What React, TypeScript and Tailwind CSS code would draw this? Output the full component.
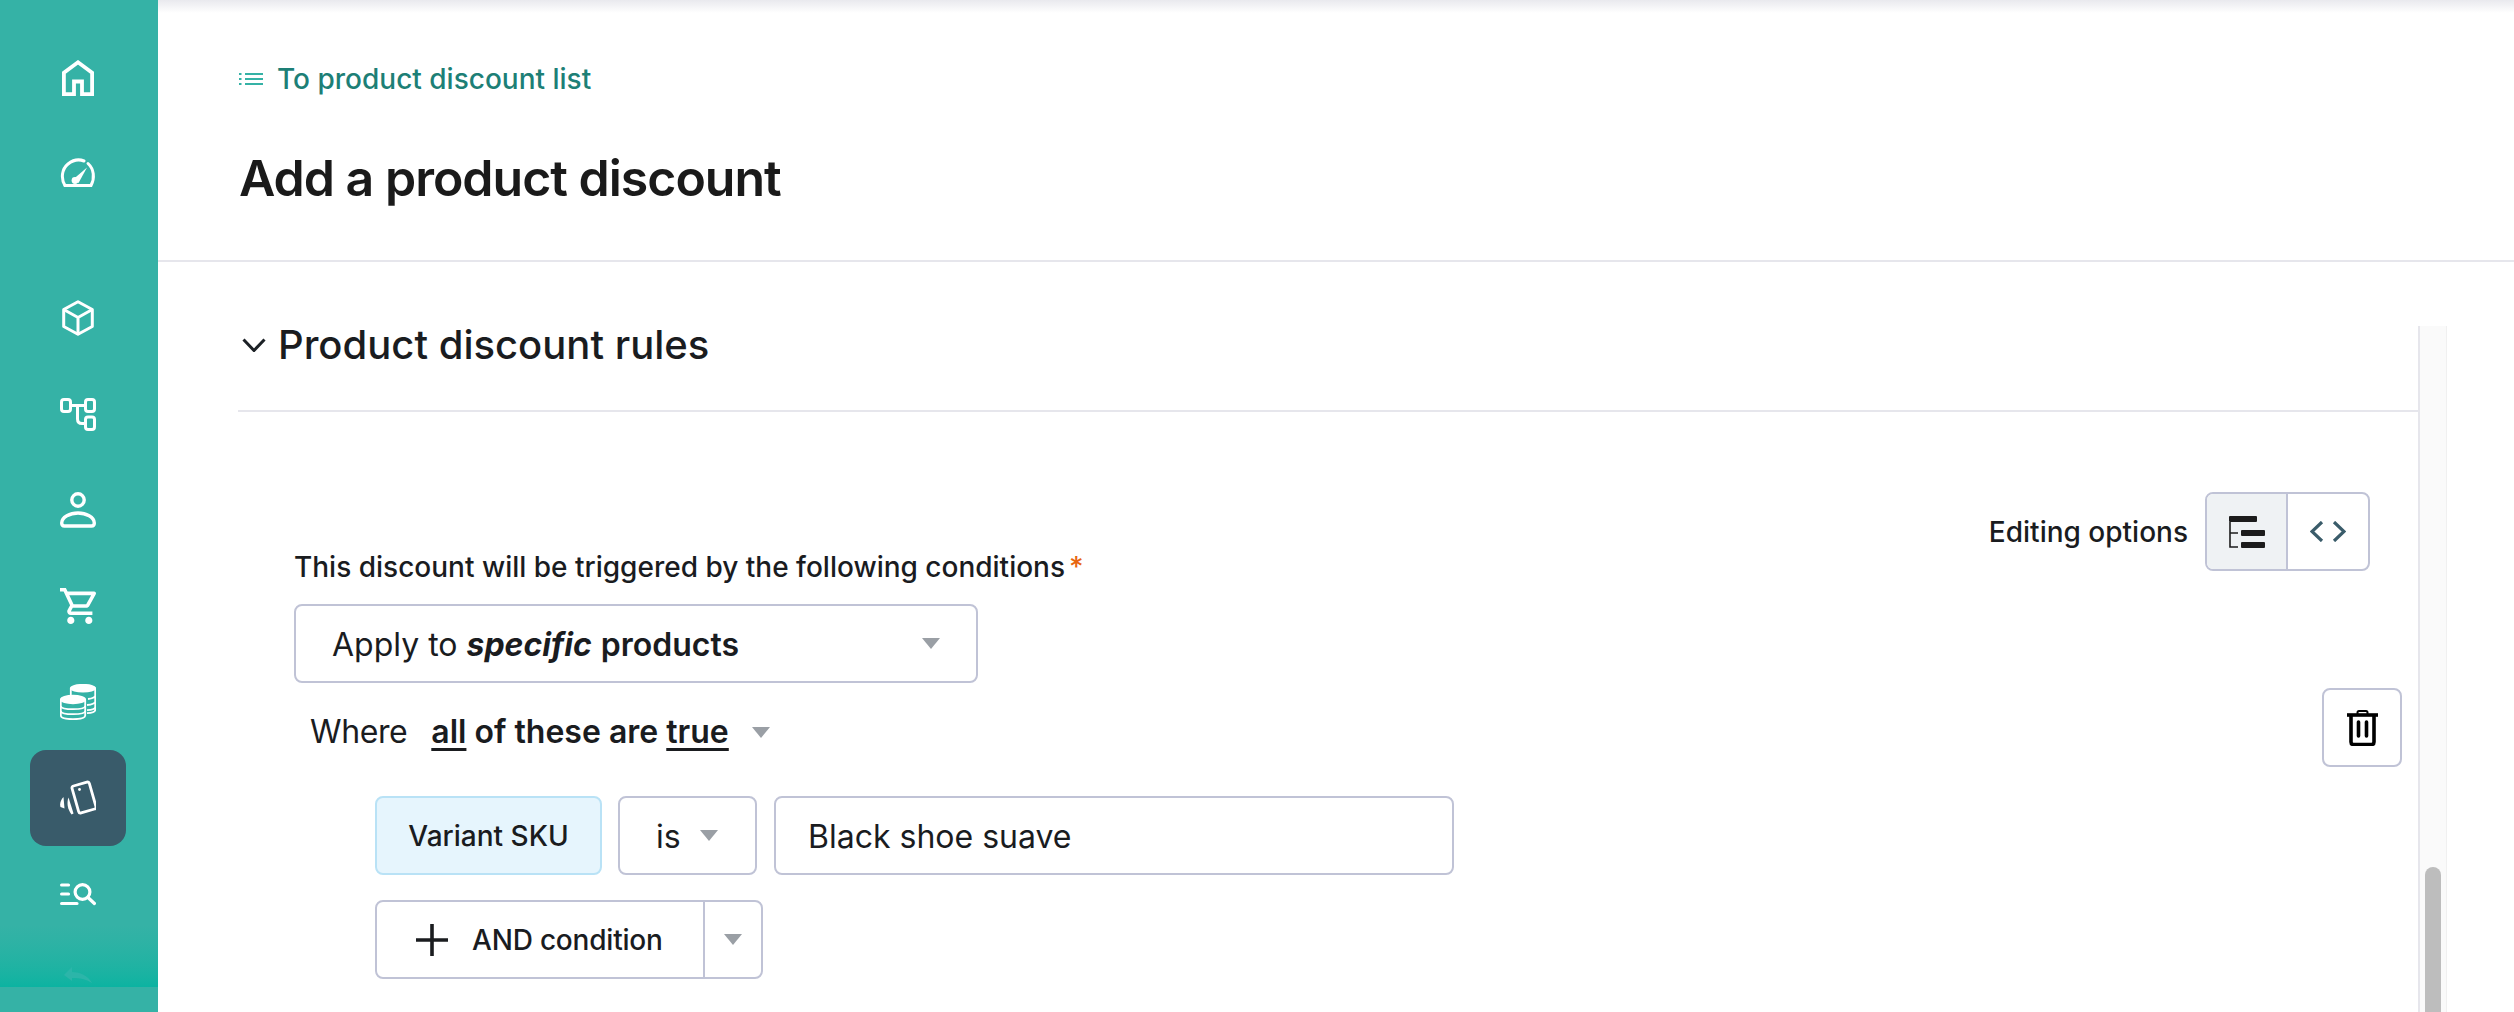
import React from 'react';

const Caret = () => (
  <svg viewBox="0 0 18 11" className="w-[18px] h-[11px] shrink-0">
    <path d="M0 0H18L9 11Z" fill="#9a9fa5" />
  </svg>
);

const HomeIcon = () => (
  <svg viewBox="0 0 32 36" className="w-8 h-9" fill="none" stroke="#fff" strokeWidth="3.8">
    <path d="M1.9 34.1V12.8L16 2.3L30.1 12.8V34.1H20V21.5H12V34.1Z" />
  </svg>
);

const GaugeIcon = () => (
  <svg viewBox="0 0 36 29" className="w-9 h-[29px]" fill="none" stroke="#fff" strokeWidth="3" strokeLinecap="round">
    <path d="M5 27.5H31C35 20 34 11 28 5.5" />
    <path d="M5 27.5C0.5 20 2 11 8 6C13 2 19 1 24 3" />
    <path d="M13 21.5L27 9.5L18.5 25Z" fill="#fff" stroke="none" />
    <circle cx="15" cy="22.5" r="3.4" fill="#fff" stroke="none" />
  </svg>
);

const CubeIcon = () => (
  <svg viewBox="0 0 32 36" className="w-8 h-9" fill="none" stroke="#fff" strokeWidth="3" strokeLinejoin="round">
    <path d="M16 1.7L30.3 9.5V26.5L16 34.3L1.7 26.5V9.5Z" />
    <path d="M1.7 9.5L16 17.5L30.3 9.5M16 17.5V34.3" />
  </svg>
);

const TreeIcon = () => (
  <svg viewBox="0 0 36 33" className="w-9 h-[33px]" fill="none" stroke="#fff" strokeWidth="3">
    <rect x="1.5" y="1.5" width="9" height="12" rx="2.5" />
    <rect x="25.5" y="1.5" width="9" height="12" rx="2.5" />
    <rect x="25.5" y="19" width="9" height="12.5" rx="2.5" />
    <path d="M10 7.5H26M17.5 7.5V21C17.5 24 19 25.5 22 25.5H26" />
  </svg>
);

const PersonIcon = () => (
  <svg viewBox="0 0 36 36" className="w-9 h-9" fill="none" stroke="#fff" strokeWidth="3.4">
    <circle cx="18" cy="8" r="6.2" />
    <path d="M4.5 34H31.5C33.5 34 34.3 33 34.3 31C34.3 25 26 21 18 21C10 21 1.7 25 1.7 31C1.7 33 2.5 34 4.5 34Z" />
  </svg>
);

const CartIcon = () => (
  <svg viewBox="1 2 20 20" className="w-9 h-9" fill="#fff">
    <path d="M15.55 13c.75 0 1.41-.41 1.75-1.03l3.58-6.49c.37-.66-.11-1.48-.87-1.48H5.21l-.94-2H1v2h2l3.6 7.59-1.35 2.44C4.52 15.37 5.48 17 7 17h12v-2H7l1.1-2h7.45zM6.16 6h12.15l-2.76 5H8.53L6.16 6zM7 18c-1.1 0-1.99.9-1.99 2S5.9 22 7 22s2-.9 2-2-.9-2-2-2zm10 0c-1.1 0-1.99.9-1.99 2s.89 2 1.99 2 2-.9 2-2-.9-2-2-2z" />
  </svg>
);

const CoinsIcon = () => (
  <svg viewBox="0 0 36 36" className="w-9 h-9" fill="none" stroke="#fff" strokeWidth="1.8">
    <ellipse cx="23" cy="4.2" rx="12.2" ry="3.4" fill="#fff" />
    <path d="M10.8 4.2V12M35.2 4.2V26C35.2 27.5 32 28.8 27 29.2M35.2 11.5C35.2 13.2 32 14.5 28 15M35.2 17.5C35.2 19.2 32 20.5 27 21M35.2 23C35.2 24.6 32 25.8 27 26.2" />
    <path d="M0.8 15.5V31.5C0.8 33.8 6 35.2 13 35.2C20 35.2 25.2 33.8 25.2 31.5V15.5" fill="#35b2a6" />
    <ellipse cx="13" cy="15.5" rx="12.2" ry="3.8" fill="#fff" />
    <path d="M0.8 22C0.8 24 6 25.2 13 25.2C20 25.2 25.2 24 25.2 22M0.8 27C0.8 29 6 30.2 13 30.2C20 30.2 25.2 29 25.2 27" />
  </svg>
);

const CardIcon = () => (
  <svg viewBox="0 0 36 36" className="w-9 h-9" fill="none" stroke="#fff" strokeWidth="2.8">
    <rect x="15" y="3.5" width="18" height="28" rx="2" transform="rotate(-16 24 17.5)" />
    <circle cx="19.5" cy="9.5" r="1.4" fill="#fff" stroke="none" />
    <path d="M3.5 17C0.5 20 -0.5 24 0.5 27L4.5 28.5Z" fill="#fff" stroke="none" />
    <path d="M8.5 17.5C6.5 23 7.5 29 11.5 34.5L13.5 33.5Z" fill="#fff" stroke="none" />
  </svg>
);

const SearchListIcon = () => (
  <svg viewBox="0 0 36 23" className="w-9 h-[23px]" fill="none" stroke="#fff" strokeWidth="3.2" strokeLinecap="round">
    <path d="M1.6 2H8.5M1.6 11H8.5M1.6 20.5H17" />
    <circle cx="22.5" cy="9" r="7.4" />
    <path d="M28 14.5L34.4 20.5" />
  </svg>
);

const navBottom = [CubeIcon, TreeIcon, PersonIcon, CartIcon, CoinsIcon, CardIcon, SearchListIcon];

const Sidebar = () => (
  <aside className="relative w-[158px] h-full shrink-0 bg-[#35b2a6] pt-[30px] pr-[2px] flex flex-col items-center">
    <div className="w-24 h-24 flex items-center justify-center">
      <HomeIcon />
    </div>
    <div className="w-24 h-[92px] flex items-center justify-center">
      <GaugeIcon />
    </div>
    <div className="h-[52px]" />
    {navBottom.map((Icon, i) => (
      <div
        key={i}
        className={`w-24 h-24 flex items-center justify-center rounded-2xl ${i === 5 ? 'bg-[#395b6a]' : ''}`}
      >
        <Icon />
      </div>
    ))}
    {/* fade over the end of the nav list */}
    <div className="absolute left-0 right-0 top-[925px] h-[62px] bg-gradient-to-b from-[#35b2a6] to-[#0bb3a1] flex items-end justify-center pb-[4px] pr-[2px]">
      <svg viewBox="0 0 28 16" className="w-7 h-4">
        <path d="M0 8L8 0V5C17 5 24 9 28 16C22 12 16 11 8 11V14Z" fill="#2cb5a9" />
      </svg>
    </div>
  </aside>
);

const Box = ({ className, children }: { className: string; children: React.ReactNode }) => (
  <div className={`h-[79px] rounded-lg border-2 border-[#c0c3d6] flex items-center ${className}`}>{children}</div>
);

const Rules = () => (
  <div className="flex-1 min-w-0 flex flex-col">
    <div className="h-[86px] border-b-2 border-[#e6e6ec] flex items-start">
      <div className="flex items-center h-[38px]">
        <svg viewBox="0 0 24 14" className="w-6 h-[14px] ml-[4px] mr-[12px]" fill="none" stroke="#1c2126" strokeWidth="3">
          <path d="M1.5 1.5L12 12.5L22.5 1.5" />
        </svg>
        <h2 className="text-[40px] leading-[38px] font-medium text-[#1a1c1f]">Product discount rules</h2>
      </div>
    </div>

    <div className="pl-[56px] pt-[80px]">
      <div className="h-[90px] flex justify-between pr-[48px]">
        <div className="self-end h-[30px] flex items-center text-[28px] font-medium text-[#1a1c1f]">
          This discount will be triggered by the following conditions
          <span className="ml-[4px] text-[#e8650f]">*</span>
        </div>
        <div className="flex items-center h-[79px]">
          <span className="text-[28px] font-medium text-[#1a1c1f] mr-[17px]">Editing options</span>
          <div className="w-[165px] h-[79px] rounded-lg border-2 border-[#c0c3d6] flex overflow-hidden">
            <div className="w-[81px] bg-[#eff2f4] border-r-2 border-[#c0c3d6] flex items-center justify-center">
              <svg viewBox="0 0 36 32" className="w-9 h-8" fill="#1c1c1c">
                <rect x="0" y="0" width="28" height="6" rx="1" />
                <rect x="12" y="14" width="24" height="6" rx="1" />
                <rect x="12" y="26" width="24" height="6" rx="1" />
                <path d="M1 6V31H9" fill="none" stroke="#1c1c1c" strokeWidth="1.6" />
                <path d="M1 17H9" fill="none" stroke="#1c1c1c" strokeWidth="1.6" />
              </svg>
            </div>
            <div className="flex-1 flex items-center justify-center">
              <svg viewBox="0 0 36 21" className="w-9 h-[21px]" fill="none" stroke="#3a5c6a" strokeWidth="3.2">
                <path d="M12 1L2 10.5L12 20M24 1L34 10.5L24 20" />
              </svg>
            </div>
          </div>
        </div>
      </div>

      <Box className="mt-[22px] w-[684px] pl-[36px] pr-[36px] justify-between text-[32px] text-[#1a1c1f]">
        <span className="pt-[2px]">
          Apply to <b className="italic font-bold">specific</b> <span className="font-semibold">products</span>
        </span>
        <Caret />
      </Box>

      <div className="mt-[5px] flex items-center justify-between pl-[16px] pr-[16px]">
        <div className="flex items-center text-[32px] text-[#1a1c1f] pt-[9px]">
          <span className="tracking-[-0.4px]">Where</span>
          <span className="ml-[24px] font-semibold">
            <span className="underline underline-offset-[5px]">all</span> of these are{' '}
            <span className="underline underline-offset-[5px]">true</span>
          </span>
          <span className="ml-[23px]">
            <Caret />
          </span>
        </div>
        <div className="w-[80px] h-[79px] rounded-lg border-2 border-[#c0c3d6] flex items-center justify-center">
          <svg viewBox="0 0 31 36" className="w-[31px] h-9" fill="none" stroke="#000" strokeWidth="3.6">
            <path d="M0 5H31" />
            <path d="M10.5 4V2.5C10.5 1.5 11 1 12 1H19C20 1 20.5 1.5 20.5 2.5V4" strokeWidth="2" />
            <path d="M4 5V32C4 33.5 5 34.5 6.5 34.5H24.5C26 34.5 27 33.5 27 32V5" />
            <path d="M11.5 12V26M19.5 12V26" strokeLinecap="round" />
          </svg>
        </div>
      </div>

      <div className="mt-[29px] pl-[81px] flex text-[#1a1c1f]">
        <Box className="w-[227px] justify-center bg-[#e6f5fd] !border-[#b9e2f6] text-[28px] font-medium">Variant SKU</Box>
        <Box className="ml-[16px] w-[139px] pl-[36px] text-[32px]">
          <span className="pt-[2px]">is</span>
          <span className="ml-[19px]">
            <Caret />
          </span>
        </Box>
        <Box className="ml-[17px] w-[680px] pl-[32px] text-[32px]">
          <span className="pt-[2px]">Black shoe suave</span>
        </Box>
      </div>

      <Box className="mt-[25px] ml-[81px] w-[388px] text-[#1a1c1f]">
        <div className="w-[328px] h-full border-r-2 border-[#c0c3d6] flex items-center pl-[39px]">
          <svg viewBox="0 0 32 32" className="w-8 h-8" fill="none" stroke="#1a1c1f" strokeWidth="3.6">
            <path d="M16 0V32M0 16H32" />
          </svg>
          <span className="ml-[24px] text-[28px] tracking-[-0.2px] font-medium">AND condition</span>
        </div>
        <div className="flex-1 flex items-center justify-center">
          <Caret />
        </div>
      </Box>
    </div>
  </div>
);

const Scrollbar = () => (
  <div className="w-[29px] h-full shrink-0 bg-[#fafafa] border-l-2 border-r border-l-[#e6e6ec] border-r-[#f0f0f0] flex flex-col justify-end">
    <div className="w-4 h-[150px] mx-auto -mb-[5px] rounded-t-full bg-[#bdbdbd]" />
  </div>
);

export default function App() {
  return (
    <div className="w-[2514px] h-[1012px] overflow-hidden flex bg-white [font-family:Inter,sans-serif]">
      <Sidebar />
      <main className="flex-1 min-w-0 flex flex-col">
        <div className="h-[262px] shrink-0 border-b-2 border-[#e6e6ec] bg-gradient-to-b from-[#e9e9ee] to-white to-[5%] pl-[81px] pt-[62px]">
          <a className="flex items-center h-[34px]">
            <svg viewBox="0 0 24 14" className="w-6 h-[14px] mr-[14px]" fill="none" stroke="#35b2a6" strokeWidth="2">
              <path d="M0 2H2.5M0 7H2.5M0 12H2.5" />
              <path d="M6 2H24M6 7H24M6 12H24" />
            </svg>
            <span className="text-[28px] font-medium text-[#1d7f76]">To product discount list</span>
          </a>
          <h1 className="mt-[54px] text-[50px] leading-[56px] tracking-[-1px] font-semibold text-[#1a1a1a]">Add a product discount</h1>
        </div>
        <div className="flex-1 min-h-0 pt-[64px] pl-[80px] pr-[67px] flex">
          <Rules />
          <Scrollbar />
        </div>
      </main>
    </div>
  );
}
